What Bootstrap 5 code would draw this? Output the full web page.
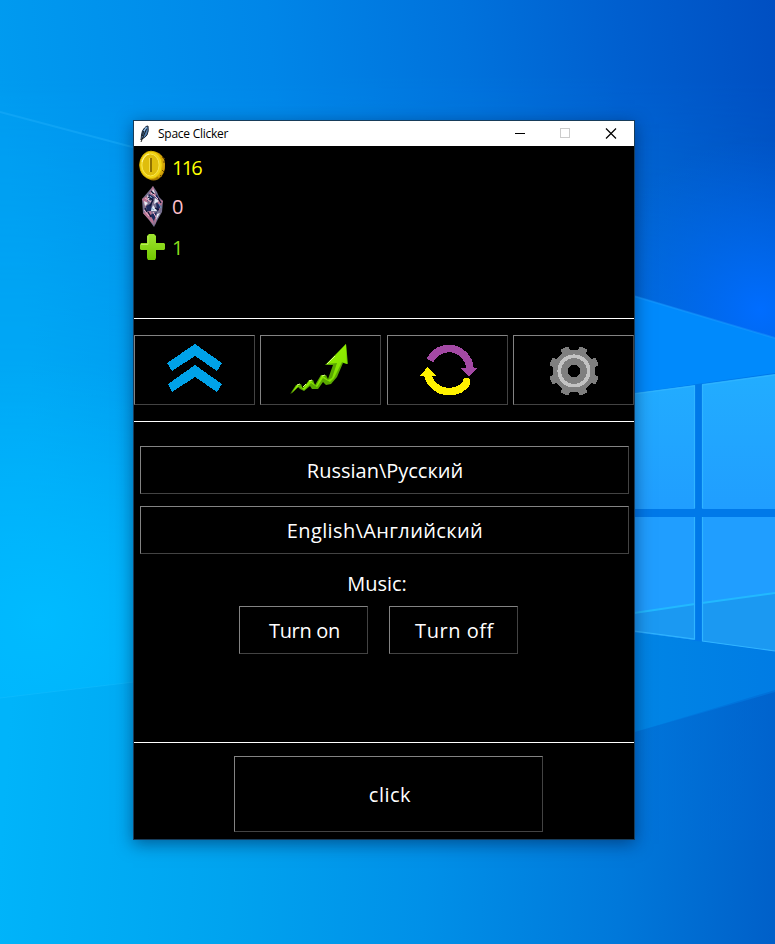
<!DOCTYPE html>
<html lang="en">
<head>
<meta charset="utf-8">
<meta name="viewport" content="width=device-width, initial-scale=1">
<title>Space Clicker</title>
<link href="https://cdn.jsdelivr.net/npm/bootstrap@5.3.0/dist/css/bootstrap.min.css" rel="stylesheet">
<style>
body{height:944px;background:#008fe8;font-family:"Comic Sans MS","Open Sans","Noto Sans",sans-serif}
.wallpaper{z-index:0}
.game{z-index:1;width:502px;height:720px;margin:120px 0 0 133px;border:1px solid #173c5a;background:#000;box-shadow:0 4px 16px rgba(0,20,60,.5);color:#fff}
.titlebar{height:25px;background:#fff;color:#000;font:12px/24px "Segoe UI","Open Sans",sans-serif}
.titlebar .caption{margin-left:7px;letter-spacing:-.25px}
.titlebar .feather{margin-left:3px}
.game svg{display:block;flex:none}
.stats{height:172px;font-size:20px;line-height:24px}
.stat{padding-left:4px}
.stat span{margin-left:5px;padding-top:2px}
.coins{height:40px;color:#ff0;letter-spacing:-1.8px}.coins span{padding-top:3px}.gems{height:41px;color:#ffc0cb}.gems span{padding-top:0}.power{height:40px;color:#8bdc1c}
.rule{height:1px;background:#fff}
.tk{border:1px solid;border-color:#838383 #434343 #434343 #838383;border-radius:0;background:#000;color:#fff;padding:2px 0 0 1px;font:20px/24px "Comic Sans MS","Open Sans","Noto Sans",sans-serif;display:flex;align-items:center;justify-content:center}
.tk:hover{background:#111;color:#fff;border-color:#838383 #434343 #434343 #838383}
.tabs-row{height:102px;padding-top:16px}
.tabs-row .tk{width:121px;height:70px;padding:0}
.settings{height:320px;padding:24px 5px 0 6px}
.lang{height:48px;margin-bottom:12px}
.lang-en{letter-spacing:.38px}
.music{margin-top:18px;padding-right:7px;line-height:24px;font-size:20px}
.switches{margin-top:10px;gap:21px;margin-right:12px}
.switches .tk{width:129px;height:48px;padding-left:2px}
.switch-on{letter-spacing:-.3px}
.switch-off{letter-spacing:.55px}
.click-area{padding:13px 0 0 100px}
.click-area .tk{width:309px;height:76px;letter-spacing:.5px;padding-left:3px}
</style>
<script src="https://cdn.jsdelivr.net/npm/bootstrap@5.3.0/dist/js/bootstrap.bundle.min.js"></script>
</head>
<body class="overflow-hidden position-relative d-flex align-items-start">
<svg class="wallpaper position-absolute top-0 start-0" width="775" height="944" viewBox="0 0 775 944" aria-hidden="true">
<defs>
<linearGradient id="low" gradientUnits="userSpaceOnUse" x1="0" y1="850" x2="775" y2="900"><stop offset="0" stop-color="#00b4fa"/><stop offset=".3" stop-color="#00a3ef"/><stop offset=".55" stop-color="#0090e8"/><stop offset=".8" stop-color="#0078da"/><stop offset="1" stop-color="#0060c9"/></linearGradient>
<linearGradient id="high" gradientUnits="userSpaceOnUse" x1="0" y1="90" x2="775" y2="10"><stop offset="0" stop-color="#009bf0"/><stop offset=".35" stop-color="#0086e8"/><stop offset=".6" stop-color="#0072dc"/><stop offset=".8" stop-color="#005fcf"/><stop offset="1" stop-color="#004fc2"/></linearGradient>
<linearGradient id="fall" x1="0" y1="0" x2="0" y2="1"><stop offset=".12" stop-color="#fff"/><stop offset="1" stop-color="#000"/></linearGradient>
<mask id="fade"><rect width="775" height="650" fill="url(#fall)"/></mask>
<radialGradient id="glow" gradientUnits="userSpaceOnUse" cx="40" cy="620" r="260"><stop offset="0" stop-color="#00bbff"/><stop offset="1" stop-color="#00b4ff" stop-opacity="0"/></radialGradient>
<radialGradient id="azure" gradientUnits="userSpaceOnUse" cx="760" cy="310" r="170"><stop offset="0" stop-color="#006dff"/><stop offset="1" stop-color="#0069ee" stop-opacity="0"/></radialGradient>
<linearGradient id="pane" x1="0" y1="0" x2="0" y2="1"><stop offset="0" stop-color="#22adff"/><stop offset="1" stop-color="#209eff"/></linearGradient>
<linearGradient id="under" x1="0" y1="0" x2="1" y2="0"><stop offset="0" stop-color="#008ae6"/><stop offset="1" stop-color="#007ce4"/></linearGradient>
<linearGradient id="shade" gradientUnits="userSpaceOnUse" x1="635" y1="0" x2="775" y2="0"><stop offset="0" stop-color="#0074dc"/><stop offset="1" stop-color="#0064d0"/></linearGradient>
</defs>
<rect width="775" height="944" fill="url(#low)"/>
<rect width="775" height="650" fill="url(#high)" mask="url(#fade)"/>
<path d="M0 360H300V666L134 682L0 698Z" fill="url(#glow)"/>
<path d="M0 112L200 165" stroke="#18aaf8" stroke-width="2" opacity=".6"/>
<path d="M0 698L134 682" stroke="#1abfff" opacity=".4"/>
<rect x="590" y="140" width="185" height="260" fill="url(#azure)"/>
<path d="M560 274L635 296L775 338V620H560Z" fill="#008afc"/>
<path d="M600 286L775 338" stroke="#22a0ff" stroke-width="2" opacity=".4"/>
<path d="M560 590H775V692L635 732L560 755Z" fill="url(#under)"/>
<path d="M635 732L775 690V840H635Z" fill="url(#shade)" opacity=".5"/>
<path d="M635 732L775 690V840L635 840Z" fill="none"/>
<path d="M634 393L775 373V652L634 632Z" fill="#0079e9"/>
<path d="M634 393L695 385V509H634ZM702 384L775 374V509H702Z" fill="url(#pane)"/>
<path d="M634 517H695V640L634 632ZM702 517H775V651L702 641Z" fill="#209eff"/>
<path d="M634 613L695 604V640L634 632ZM702 603L775 593V651L702 641Z" fill="#1b99f2"/>
<path d="M634 613L695 604M702 603L775 593" stroke="#22b9ff" stroke-width="2"/>
<path d="M634 394L694.500 386V508M702.500 508V385L775 375M694.500 517V639L634 631M702.500 517V641L775 651" fill="none" stroke="#30b4ff" stroke-width="1.200"/>
</svg>

<main class="game position-relative d-flex flex-column flex-shrink-0">
<header class="titlebar d-flex align-items-center">
<svg class="feather" width="14" height="18" viewBox="0 0 14 18"><path d="M4 15L4.500 10Q5 5 7.500 3Q9 1 11 1Q12 6 10 10Q8 13 4.500 14Z" fill="#527eaf" stroke="#162437" stroke-width="1"/><path d="M4 17L9.500 4M5.500 11L6.500 6" stroke="#111" stroke-width=".9"/><path d="M7 6L9.500 2" stroke="#a9cff2"/></svg>
<span class="caption">Space Clicker</span>
<svg class="ms-auto" width="137" height="25" viewBox="0 0 137 25" fill="none" shape-rendering="crispEdges"><path d="M18 12.500H28" stroke="#000"/><path d="M63.500 7.500H72.500V16.500H63.500Z" stroke="#ccc"/><path d="M109 7.500L119 17.500M119 7.500L109 17.500" stroke="#000" shape-rendering="auto" stroke-width="1.200"/></svg>
</header>

<section class="stats">
<div class="stat coins d-flex align-items-center">
<svg width="29" height="32" viewBox="0 0 29 32"><ellipse cx="15.500" cy="16" rx="11.500" ry="14.500" fill="#a87b00"/><path d="M17 2Q26 4 27 14Q27 24 20 28" fill="#d3a30a"/><path d="M24 7L27 9M25 12H27M24 20L26 22M22 25L24 27" stroke="#6d4b00"/><ellipse cx="13" cy="15" rx="11.300" ry="13.800" fill="#f2d414" stroke="#d9b400"/><ellipse cx="12.500" cy="15" rx="8.600" ry="11" fill="#dfbd0c" stroke="#f7e552"/><path d="M11 8H14V22H11Z" fill="#8f7100"/><path d="M11.500 8V22" stroke="#f3da42"/><path d="M4 12Q6 5 11 4" fill="none" stroke="#fff69b"/></svg>
<span>116</span></div>
<div class="stat gems d-flex align-items-center">
<svg width="29" height="41" viewBox="0 0 29 41"><g transform="translate(1 0)"><path d="M14 0L18 6L20 11L24 15L23 26L19 33L15 41L10 34L4 27L3 13L9 6Z" fill="#77708f"/><path d="M14 0L17 10L10 8ZM3 13L10 9L7 22ZM24 15L18 12L20 25ZM4 27L12 25L15 39ZM15 33L18 29L16 39Z" fill="#b87593"/><path d="M10 8L16 12L8 15ZM7 20L13 17L12 25L8 25ZM17 16L22 20L18 26ZM11 29L18 26L15 35ZM18 8L20 14L16 11Z" fill="#1d2a5c"/><path d="M14 3L12 8L16 7ZM16 12L20 15L15 18ZM14 19L18 25L12 25ZM5 15L9 17L6 20ZM18 28L21 27L17 34ZM8 9L12 12L9 14Z" fill="#e3ebf6"/><path d="M9 11L14 14L11 20M19 12L22 17M9 26L12 31M16 22L20 24M6 22L8 26M12 5L15 8" fill="none" stroke="#0e1233" stroke-width="1.300"/><path d="M14 8L19 13M6 12L12 16M14 26L17 31M5 24L10 30" stroke="#f3b3cf"/><path d="M12 22L15 24M20 18L22 22M11 10L13 12" stroke="#6f9dc4"/></g></svg>
<span>0</span></div>
<div class="stat power d-flex align-items-center">
<svg width="29" height="28" viewBox="0 0 29 28"><defs><linearGradient id="plus" x1="0" y1="0" x2="0" y2="1"><stop stop-color="#a0e530"/><stop offset="1" stop-color="#71c800"/></linearGradient></defs><path d="M11 1H16L18 3V10H26L27 11V16L26 17H18V25L17 27H10L9 25V17H3L2 16V12L3 10H9V3Z" fill="url(#plus)"/><path d="M3 11.500H10V3" fill="none" stroke="#b9ee55"/></svg>
<span>1</span></div>
</section>
<div class="rule"></div>

<nav class="tabs-row d-flex justify-content-between align-items-start">
<button class="btn tk" aria-label="Upgrades"><svg width="119" height="68" viewBox="0 0 119 68" shape-rendering="crispEdges" fill="#00a2e8"><path d="M60 8L87 27L82 35L60 20L37 35L32 27ZM60 29L87 48L82 56L60 41L37 56L33 48Z"/></svg></button>
<button class="btn tk" aria-label="Statistics"><svg width="119" height="68" viewBox="0 0 119 68"><defs><linearGradient id="grow" x1="0" y1="0" x2="1" y2="1"><stop stop-color="#afff00"/><stop offset="1" stop-color="#70d800"/></linearGradient></defs><path d="M29 58L35 49L40 48L42 53L48 44L52 44L54 49L60 39L65 39L67 43L72 29L64 29L85 8L87 28L82 27L76 41L70 48L65 49L62 46L57 53L51 53L49 50L43 55L39 53L37 51Z" fill="#5aa800"/><path d="M30 58L36 49L42 52L49 44L55 50L61 39L67 44L71 42L76 27L66 28L85 8L86 28L81 26L73 42L69 46L62 42L56 51L50 47L43 54L38 50Z" fill="url(#grow)"/><path d="M66 28L74 20M36 49L39 48M48 45L51 44M61 40L64 39M42 51L45 48" stroke="#d8ff85"/></svg></button>
<button class="btn tk" aria-label="Exchange"><svg width="119" height="68" viewBox="0 0 119 68" fill="none" shape-rendering="crispEdges"><path d="M42 24.500A22 22 0 0 1 60 12.500A21.500 21.500 0 0 1 82 33" stroke="#a349a4" stroke-width="7.500"/><path d="M73 32H89L81 41Z" fill="#a349a4"/><path d="M79.500 46A22 22 0 0 1 60 55.500A21.500 21.500 0 0 1 39.500 37" stroke="#fff200" stroke-width="7.500"/><path d="M32 40L39.500 31L48 40Z" fill="#fff200"/><circle cx="79.500" cy="46" r="3.500" transform="translate(-1 -1)" fill="#fff200"/></svg></button>
<button class="btn tk" aria-label="Settings"><svg width="119" height="68" viewBox="0 0 119 68" shape-rendering="crispEdges"><g transform="translate(60 35)" fill="none"><g stroke="#7f7f7f" stroke-width="8.500" stroke-linejoin="round"><g transform="rotate(22.500)"><path d="M0-25V25M-25 0H25"/><path d="M0-25V25M-25 0H25" transform="rotate(45)"/></g></g><circle r="21" fill="#7f7f7f"/><circle r="14.700" stroke="#c3c3c3" stroke-width="3.700"/><circle r="6.200" fill="#000"/></g></svg></button>
</nav>
<div class="rule"></div>

<section class="settings">
<button class="btn tk lang w-100">Russian\Русский</button>
<button class="btn tk lang lang-en w-100">English\Английский</button>
<div class="music text-center"><span class="me-2">Music:</span></div>
<div class="switches d-flex justify-content-center"><button class="btn tk switch-on">Turn on</button><button class="btn tk switch-off">Turn off</button></div>
</section>
<div class="rule"></div>
<section class="click-area"><button class="btn tk">click</button></section>
</main>
</body>
</html>
